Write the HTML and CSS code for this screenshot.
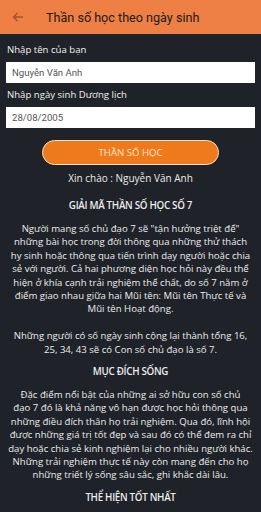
FILE: index.html
```html
<!DOCTYPE html>
<html lang="vi">

<head>
    <meta charset="UTF-8">
    <meta name="viewport" content="width=device-width, initial-scale=1.0">
    <title>Thần số học theo ngày sinh</title>
    <link rel="stylesheet" href="styles.css">
</head>

<body>
    <div class="topbar">
        <svg class="back" width="12" height="10" viewBox="0 0 12 10">
            <path d="M11 5H1.5M5.5 1L1.5 5L5.5 9" fill="none" stroke="#9c5534" stroke-width="1.4" />
        </svg>
        <h1>Thần số học theo ngày sinh</h1>
    </div>
    <div class="content">
        <label for="name">Nhập tên của bạn</label>
        <input type="text" id="name" class="field" value="Nguyễn Văn Anh" />
        <label for="date">Nhập ngày sinh Dương lịch</label>
        <input type="text" id="date" class="field" value="28/08/2005" />
        <button class="go">THẦN SỐ HỌC</button>
        <p class="hello">Xin chào : Nguyễn Văn Anh</p>

        <h2>GIẢI MÃ THẦN SỐ HỌC SỐ 7</h2>
        <p>Người mang số chủ đạo 7 sẽ "tận hưởng triệt để"<br>những bài học trong đời thông qua những thử thách<br>hy sinh hoặc thông qua tiến trình dạy người hoặc chia<br>sẻ với người. Cả hai phương diện học hỏi này đều thể<br>hiện ở khía cạnh trải nghiệm thể chất, do số 7 nằm ở<br>điểm giao nhau giữa hai Mũi tên: Mũi tên Thực tế và<br>Mũi tên Hoạt động.</p>
        <p>Những người có số ngày sinh cộng lại thành tổng 16,<br>25, 34, 43 sẽ có Con số chủ đạo là số 7.</p>

        <h2>MỤC ĐÍCH SỐNG</h2>
        <p>Đặc điểm nổi bật của những ai sở hữu con số chủ<br>đạo 7 đó là khả năng vô hạn được học hỏi thông qua<br>những điều đích thân họ trải nghiệm. Qua đó, lĩnh hội<br>được những giá trị tốt đẹp và sau đó có thể đem ra chỉ<br>dạy hoặc chia sẻ kinh nghiệm lại cho nhiều người khác.<br>Những trải nghiệm thực tế này còn mang đến cho họ<br>những triết lý sống sâu sắc, ghi khắc dài lâu.</p>

        <h2>THỂ HIỆN TỐT NHẤT</h2>
    </div>
</body>

</html>
```

FILE: styles.css
```css
* {
    margin: 0;
    padding: 0;
    box-sizing: border-box;
}

body {
    width: 261px;
    height: 512px;
    overflow: hidden;
    background-color: #1f2228;
    font-family: "Open Sans", sans-serif;
    color: #ececec;
}

.topbar {
    height: 34px;
    background-color: #ee7f45;
    display: flex;
    align-items: center;
    padding-left: 12px;
}

.back {
    margin-right: 22px;
}

.topbar h1 {
    font-family: Roboto, sans-serif;
    font-weight: 400;
    font-size: 12.6px;
    color: #1b1b1b;
}

.content {
    padding: 9px 6px 0;
    display: flex;
    flex-direction: column;
}

label {
    font-size: 9.6px;
    color: #f2f2f2;
    margin-left: 1px;
    line-height: 14px;
}

.field {
    width: 249px;
    height: 21px;
    margin: 5px 0 5px;
    border: none;
    background: #fff;
    padding-left: 6px;
    font-family: Roboto, sans-serif;
    font-size: 9.6px;
    color: #555;
}

.go {
    align-self: center;
    width: 177px;
    height: 25px;
    margin-top: 7px;
    border: 1px solid #f3e2c6;
    border-radius: 13px;
    background-color: #ef7a1c;
    color: #fce6cf;
    font-family: "Open Sans", sans-serif;
    font-size: 9.6px;
}

.hello {
    text-align: center;
    font-size: 10px;
    line-height: 14px;
}

h2 {
    text-align: center;
    font-size: 9.8px;
    font-weight: 600;
    letter-spacing: -0.3px;
    margin: 9px 0 9px;
    line-height: 14px;
}

p {
    text-align: center;
    font-size: 9.6px;
    line-height: 13.4px;
    margin-left: -4px;
    margin-right: -4px;
}

p + p {
    margin-top: 13.4px;
}

.content p.hello {
    margin: 6px 0 5px;
}
```
